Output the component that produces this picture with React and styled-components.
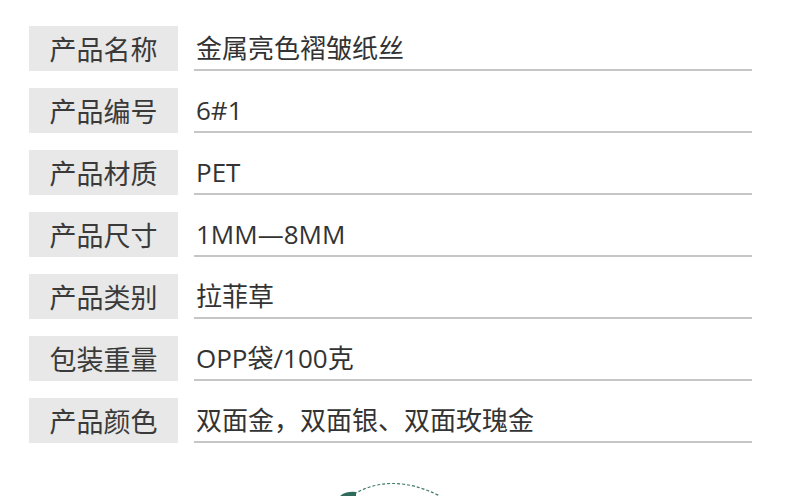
import React from "react";
import styled, { createGlobalStyle } from "styled-components";

const Global = createGlobalStyle`
  html, body { margin: 0; padding: 0; background: #fff; }
  body { font-family: "Open Sans", "Noto Sans CJK SC", sans-serif; overflow: hidden; }
`;

const Page = styled.div`
  width: 790px;
  height: 496px;
  position: relative;
  overflow: hidden;
  background: #fff;
`;

const Table = styled.div`
  display: flex;
  flex-direction: column;
  gap: 17px;
  padding: 26px 0 0 29px;
`;

const Row = styled.div`
  display: flex;
  align-items: stretch;
  gap: 16px;
  height: 45px;
`;

const Label = styled.div`
  width: 149px;
  background: #e8e8e8;
  color: #3a3a3a;
  font-family: "Noto Sans CJK SC", sans-serif;
  font-size: 27px;
  display: flex;
  align-items: center;
  justify-content: center;
  line-height: 1;
`;

const Value = styled.div`
  width: 558px;
  border-bottom: 2px solid #c6c6c6;
  color: #333;
  font-family: "Open Sans", "Noto Sans CJK SC", sans-serif;
  font-size: 26px;
  display: flex;
  align-items: center;
  padding-left: 2px;
  box-sizing: border-box;
  line-height: 1;
`;

const Deco = styled.svg`
  position: absolute;
  left: 330px;
  top: 470px;
`;

const rows = [
  ["产品名称", "金属亮色褶皱纸丝"],
  ["产品编号", "6#1"],
  ["产品材质", "PET"],
  ["产品尺寸", "1MM—8MM"],
  ["产品类别", "拉菲草"],
  ["包装重量", "OPP袋/100克"],
  ["产品颜色", "双面金，双面银、双面玫瑰金"],
];

export default function App() {
  return (
    <Page>
      <Global />
      <Table>
        {rows.map(([k, v]) => (
          <Row key={k}>
            <Label>{k}</Label>
            <Value>{v}</Value>
          </Row>
        ))}
      </Table>
      <Deco width="130" height="26" viewBox="0 0 130 26">
        <path d="M24 24 Q62 2 110 26" fill="none" stroke="#3f7a6a" strokeWidth="1.2" strokeDasharray="3 2" />
        <path d="M10 26 Q16 21 26 22 L26 26 Z" fill="#2f6b5b" />
      </Deco>
    </Page>
  );
}
